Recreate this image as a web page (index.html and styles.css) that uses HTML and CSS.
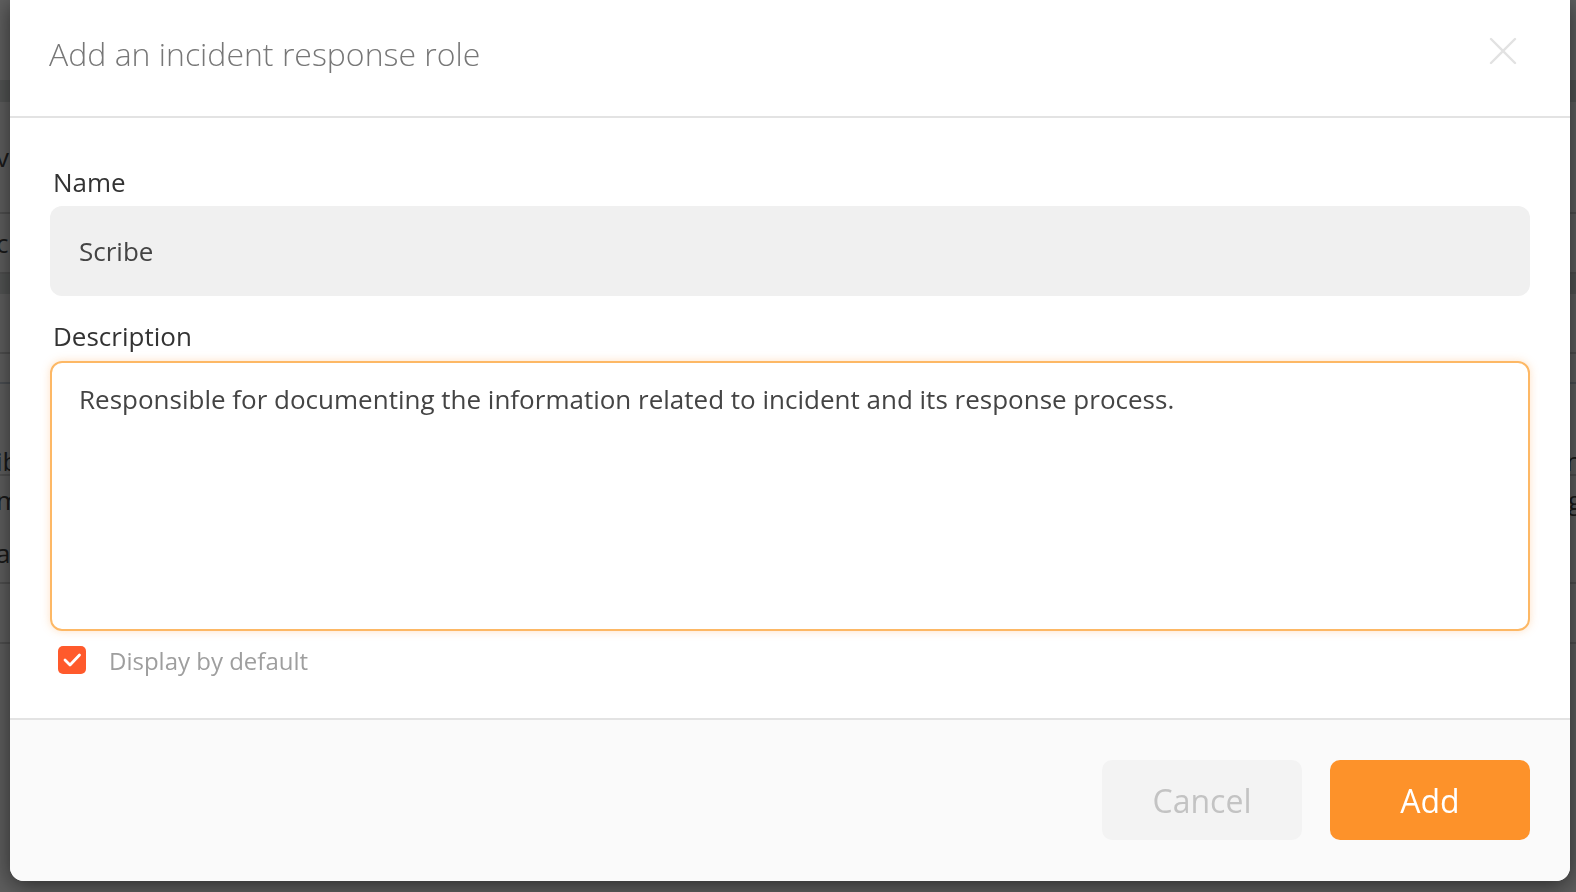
FILE: index.html
```html
<!DOCTYPE html>
<html lang="en">
<head>
<meta charset="utf-8">
<title>Add an incident response role</title>
<link rel="stylesheet" href="styles.css">
</head>
<body>
<div class="page">
  <div class="page-top"></div>
  <div class="page-band"></div>
  <div class="page-row tall"><span class="frag">v</span><span class="frag right">&nbsp;</span></div>
  <div class="page-row"><span class="frag">c</span></div>
  <div class="page-band short"></div>
  <div class="page-row"></div>
  <div class="page-row blue"></div>
  <div class="page-row big"><span class="frag">ib</span><span class="frag right">n</span></div>
  <div class="page-row mid"><span class="frag">m</span><span class="frag right">g</span></div>
  <div class="page-row"><span class="frag">a</span></div>
  <div class="page-row"></div>
</div>
<div class="overlay">
  <div class="modal">
    <div class="modal-header">
      <h1 class="modal-title">Add an incident response role</h1>
      <button class="close" aria-label="Close">
        <svg width="28" height="28" viewBox="0 0 28 28"><path d="M2 2 L26 26 M26 2 L2 26" stroke="#e2e2e2" stroke-width="2.4" stroke-linecap="round" fill="none"/></svg>
      </button>
    </div>
    <div class="modal-body">
      <label class="field-label">Name</label>
      <div class="input">Scribe</div>
      <label class="field-label second">Description</label>
      <div class="textarea">Responsible for documenting the information related to incident and its response process.</div>
      <div class="check-row">
        <span class="checkbox">
          <svg width="28" height="28" viewBox="0 0 28 28"><path d="M7 14 L12 19 L21.5 9" stroke="#fff" stroke-width="2.8" stroke-linecap="round" stroke-linejoin="round" fill="none"/></svg>
        </span>
        <span class="check-label">Display by default</span>
      </div>
    </div>
    <div class="modal-footer">
      <button class="btn btn-cancel">Cancel</button>
      <button class="btn btn-add">Add</button>
    </div>
  </div>
</div>
</body>
</html>
```

FILE: styles.css
```css
html, body {
  margin: 0;
  padding: 0;
  height: 100%;
  overflow: hidden;
}
body {
  font-family: "Open Sans", "Noto Sans", sans-serif;
  background: #ffffff;
}
.page {
  display: flex;
  flex-direction: column;
  height: 892px;
  background: #f4f4f4;
}
.page-top { height: 80px; background: #f8f8f8; }
.page-band { height: 22px; background: #d8dcdb; }
.page-band.short { height: 20px; }
.page-row {
  height: 58px;
  border-bottom: 2px solid #cfcfcf;
  display: flex;
  justify-content: space-between;
  align-items: center;
  background: #f7f7f7;
}
.page-row.tall { height: 110px; }
.page-row.blue { border-bottom-color: #c4cdd8; height: 28px; }
.page-row.big { height: 90px; align-items: flex-end; }
.page-row.mid { height: 48px; border-bottom: none; }
.frag {
  font-size: 26px;
  color: #444;
  line-height: 1;
  margin-left: -4px;
}
.frag.right { margin-left: 0; margin-right: -6px; }

.overlay {
  position: fixed;
  inset: 0;
  background: rgba(0, 0, 0, 0.62);
  padding: 0 6px 0 10px;
}
.modal {
  background: #ffffff;
  border-radius: 0 0 14px 14px;
  box-shadow: 0 4px 22px rgba(0, 0, 0, 0.55);
  width: 1560px;
  overflow: hidden;
}
.modal-header {
  height: 118px;
  border-bottom: 2px solid #e3e3e3;
  display: flex;
  align-items: center;
  justify-content: space-between;
  padding: 0 53px 0 39px;
  box-sizing: border-box;
}
.modal-title {
  margin: 0;
  font-size: 32px;
  font-weight: 300;
  color: #777777;
  padding-bottom: 10px;
}
.close {
  background: none;
  border: none;
  padding: 0;
  width: 28px;
  height: 28px;
  margin-bottom: 14px;
}
.modal-body {
  padding: 46px 40px 44px 40px;
  display: flex;
  flex-direction: column;
}
.field-label {
  font-size: 26px;
  line-height: 36px;
  color: #333333;
  padding-left: 3px;
  margin-bottom: 6px;
}
.field-label.second { margin-top: 22px; margin-bottom: 7px; }
.input {
  height: 90px;
  box-sizing: border-box;
  background: #f0f0f0;
  border-radius: 12px;
  font-size: 26px;
  color: #444444;
  display: flex;
  align-items: center;
  padding-left: 29px;
}
.textarea {
  height: 270px;
  box-sizing: border-box;
  border: 2px solid #fdb865;
  border-radius: 12px;
  box-shadow: 0 0 8px rgba(253, 170, 90, 0.35);
  font-size: 26px;
  line-height: 36px;
  color: #444444;
  padding: 18px 27px;
}
.check-row {
  margin-top: 15px;
  display: flex;
  align-items: center;
  height: 28px;
  padding-left: 8px;
}
.checkbox {
  width: 28px;
  height: 28px;
  border-radius: 5px;
  background: #ff5a2c;
  display: flex;
}
.check-label {
  margin-left: 23px;
  font-size: 24px;
  color: #9e9e9e;
}
.modal-footer {
  border-top: 2px solid #e3e3e3;
  background: #fafafa;
  padding: 40px 40px 41px 0;
  display: flex;
  justify-content: flex-end;
  gap: 28px;
}
.btn {
  width: 200px;
  height: 80px;
  border: none;
  border-radius: 10px;
  font-family: "Open Sans", "Noto Sans", sans-serif;
  font-size: 32px;
  padding: 0;
}
.btn-cancel {
  background: #f3f3f3;
  color: #c3c3c3;
}
.btn-add {
  background: #fd922a;
  color: #ffffff;
}
```
